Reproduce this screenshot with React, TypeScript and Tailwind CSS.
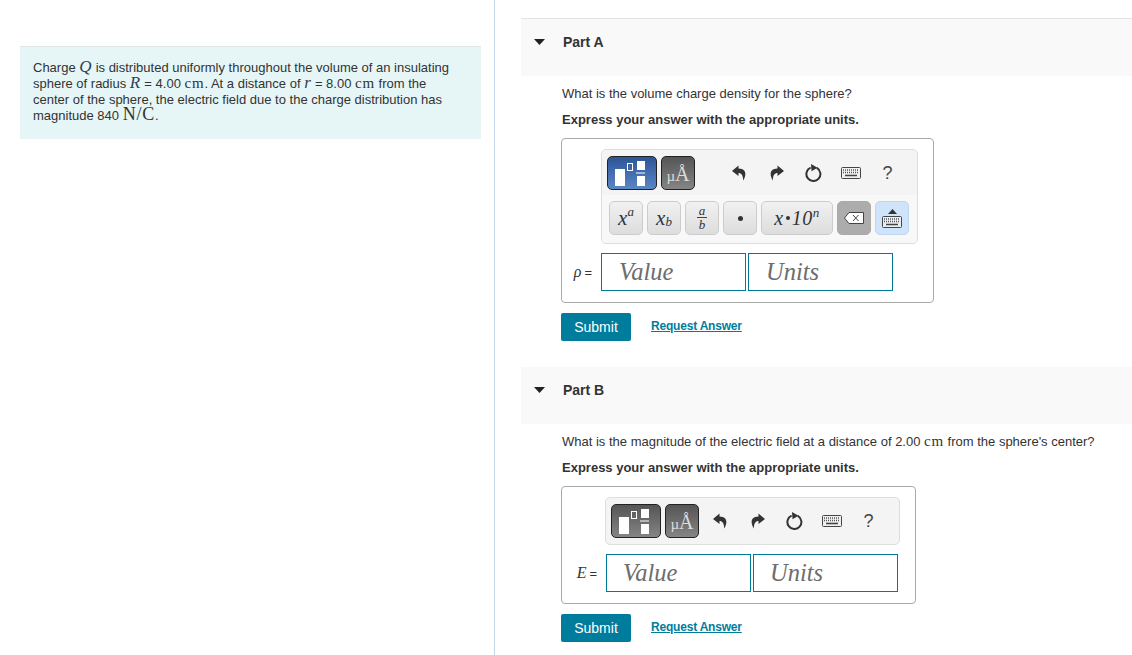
import React from 'react';

const serif = "font-['Liberation_Serif',serif]";

const Var: React.FC<{ children: React.ReactNode }> = ({ children }) => (
  <span className={`${serif} italic text-[17px] leading-[0] text-[#2f3f55] tracking-[0.5px]`}>{children}</span>
);

const Unit: React.FC<{ children: React.ReactNode }> = ({ children }) => (
  <span className={`${serif} text-[15px] leading-[0] tracking-[0.8px]`}>{children}</span>
);

const UndoIcon = () => (
  <svg width="15" height="16" viewBox="0 0 15 16">
    <path d="M6.5 0.5 L0 6 L6.5 11 L6.5 8 C9.5 8 11 10 11.2 15.5 C14 11 15.5 4 6.5 3.6 Z" fill="#333" />
  </svg>
);

const RedoIcon = () => (
  <svg width="15" height="16" viewBox="0 0 15 16">
    <path d="M8.5 0.5 L15 6 L8.5 11 L8.5 8 C5.5 8 4 10 3.8 15.5 C1 11 -0.5 4 8.5 3.6 Z" fill="#333" />
  </svg>
);

const ReloadIcon = () => (
  <svg width="18" height="18" viewBox="0 0 18 18" fill="none">
    <path d="M11.8 3.9 A7 7 0 1 1 5.6 3.6" stroke="#333" strokeWidth="2" />
    <path d="M6 0 L12.5 3.8 L6.5 7.2 Z" fill="#333" />
  </svg>
);

const KeyboardIcon: React.FC<{ fill?: string }> = ({ fill = '#f1f1f1' }) => (
  <svg width="20" height="12" viewBox="0 0 20 12">
    <rect x="0.5" y="0.5" width="19" height="11" rx="1" fill={fill} stroke="#444" />
    <path d="M2 3h16M2 5.5h16" stroke="#555" strokeWidth="1.3" strokeDasharray="1 1" />
    <path d="M4 8.5h12" stroke="#444" strokeWidth="1.6" />
  </svg>
);

const TemplateIcon = () => (
  <svg width="30" height="25" viewBox="0 0 30 25" className="mr-[4px]">
    <rect x="0" y="8" width="10" height="17" fill="#fff" />
    <rect x="12.5" y="2.5" width="5" height="7" fill="none" stroke="#fff" />
    <rect x="22" y="0" width="8" height="9" fill="#fff" />
    <rect x="21" y="11.5" width="10" height="1" fill="#fff" />
    <rect x="22" y="15" width="8" height="10" fill="#fff" />
  </svg>
);

const ToolIcon: React.FC<{ children: React.ReactNode }> = ({ children }) => (
  <div className="w-[37px] h-[34px] flex items-center justify-center">{children}</div>
);

const TopRow: React.FC<{ active?: boolean; iconGap: string }> = ({ active, iconGap }) => (
  <div className="flex items-center gap-[4px]">
    <div
      className={`w-[50px] h-[34px] rounded-[5px] border border-[#222] flex items-center justify-center ${
        active ? 'bg-gradient-to-b from-[#2c5596] to-[#5b86c6]' : 'bg-gradient-to-b from-[#555] to-[#858585]'
      }`}
    >
      <TemplateIcon />
    </div>
    <div className={`w-[34px] h-[34px] rounded-[5px] border border-[#222] bg-gradient-to-b from-[#555] to-[#858585] flex items-baseline justify-center ${serif} text-[#ddd] text-[20px] leading-[34px]`}>
      <span className="text-[15px]">µ</span>Å
    </div>
    <div className={`flex items-center ${iconGap}`}>
      <ToolIcon><UndoIcon /></ToolIcon>
      <ToolIcon><RedoIcon /></ToolIcon>
      <ToolIcon><ReloadIcon /></ToolIcon>
      <ToolIcon><KeyboardIcon /></ToolIcon>
      <ToolIcon><span className="text-[18px] text-[#444]">?</span></ToolIcon>
    </div>
  </div>
);

const keyClass = `h-[34px] rounded-[5px] border border-[#ccc] bg-gradient-to-b from-[#f1f1f1] to-[#dddddd] flex items-center justify-center ${serif} italic text-[#333]`;

const KeyRow = () => (
  <div className="flex items-start gap-[4px] mt-[5px] -ml-[5px] pl-[7px] pt-[6px] h-[48px] bg-[#f8f8f8]">
    <div className={`${keyClass} w-[34px] text-[21px]`}>
      x<sup className="text-[13px] -top-[6px] relative align-baseline">a</sup>
    </div>
    <div className={`${keyClass} w-[34px] text-[21px]`}>
      x<sub className="text-[13px] top-[4px] relative align-baseline">b</sub>
    </div>
    <div className={`${keyClass} w-[34px] flex-col text-[13px]`}>
      <span className="border-b border-[#444] px-[2px] leading-[13px]">a</span>
      <span className="leading-[14px]">b</span>
    </div>
    <div className={`${keyClass} w-[34px]`}>
      <span className="w-[5px] h-[5px] rounded-full bg-[#333]" />
    </div>
    <div className={`${keyClass} w-[72px] text-[20px] tracking-[0.5px]`}>
      x<span className="w-[4px] h-[4px] rounded-full bg-[#333] mx-[2px]" />10<sup className="text-[13px] -top-[5px] relative align-baseline">n</sup>
    </div>
    <div className="w-[34px] h-[34px] rounded-[5px] bg-[#acacac] border border-[#aaa] flex items-center justify-center">
      <svg width="20" height="12" viewBox="0 0 20 12">
        <path d="M5 0.5 H19.5 V11.5 H5 L0.5 6 Z" fill="#fff" stroke="#444" />
        <path d="M9 3 L14.5 9 M14.5 3 L9 9" stroke="#444" strokeWidth="1" />
      </svg>
    </div>
    <div className="w-[34px] h-[34px] rounded-[5px] bg-[#cfe4fb] border border-[#bcd6ee] flex flex-col items-center justify-center gap-[2px]">
      <svg width="9" height="5" viewBox="0 0 9 5">
        <path d="M4.5 0 L9 5 H0 Z" fill="#333" />
      </svg>
      <KeyboardIcon fill="#e9eef3" />
    </div>
  </div>
);

const AnswerInputs: React.FC<{ symbol: string; labelW: string; pad: string; inputPad: string }> = ({ symbol, labelW, pad, inputPad }) => (
  <div className="flex items-center h-[38px]">
    <div className={`${labelW} ${pad} flex justify-end items-baseline text-[13px] text-[#333]`}>
      <span className={`${serif} italic text-[16px] mr-[3px]`}>{symbol}</span>=
    </div>
    <div className="flex gap-[2px]">
      {['Value', 'Units'].map((t) => (
        <div
          key={t}
          className={`w-[145px] h-[38px] border border-[#007a9b] flex items-center ${inputPad} ${serif} italic text-[24.5px] text-[#6d6d6d]`}
        >
          {t}
        </div>
      ))}
    </div>
  </div>
);

const Actions = () => (
  <div className="flex items-center mt-[10px] -ml-px">
    <button className="w-[70px] h-[28px] rounded-[2px] bg-[#007c9d] text-white text-[14px]">Submit</button>
    <a className="ml-[20px] pb-[2px] text-[12px] tracking-[-0.2px] font-bold text-[#007c9d] underline">Request Answer</a>
  </div>
);

const PartHeader: React.FC<{ label: string; border?: boolean }> = ({ label, border }) => (
  <div className={`bg-[#f9f9f9] flex items-start pl-[13px] pt-[14px] ${border ? 'border-t border-[#e3e3e3] h-[58px]' : 'h-[57px]'}`}>
    <div className="w-[29px] h-[18px] flex items-center">
      <svg width="11" height="6" viewBox="0 0 11 6">
        <path d="M0 0 H11 L5.5 6 Z" fill="#222" />
      </svg>
    </div>
    <span className="text-[14px] leading-[18px] font-bold text-[#333]">{label}</span>
  </div>
);

export default function App() {
  return (
    <div className="flex w-[1132px] h-[655px] overflow-hidden bg-white font-['Liberation_Sans',Arial,sans-serif] text-[#333]">
      <div className="w-[495px] shrink-0 border-r border-[#c3d7e8] pt-[46px] pl-[20px] pr-[13px]">
        <div className="h-[93px] bg-[#e6f6f7] border-t border-[#dfe6e8] pl-[13px] pr-[20px] pt-[13px] text-[13px] leading-[16px]">
          Charge <Var>Q</Var> is distributed uniformly throughout the volume of an insulating sphere of radius{' '}
          <Var>R</Var> = 4.00 <Unit>cm</Unit>. At a distance of <Var>r</Var> = 8.00 <Unit>cm</Unit> from the center of
          the sphere, the electric field due to the charge distribution has magnitude 840{' '}
          <span className={`${serif} text-[18px] leading-[0] tracking-[0.8px]`}>N/C</span>.
        </div>
      </div>

      <div className="flex-1 pl-[26px] pt-[18px]">
        <PartHeader label="Part A" border />
        <div className="pl-[41px] text-[13px] leading-[16px]">
          <p className="mt-[10px]">What is the volume charge density for the sphere?</p>
          <p className="mt-[10px] font-bold">Express your answer with the appropriate units.</p>
          <div className="mt-[10px] -ml-px w-[373px] h-[165px] border border-[#aaa] rounded-[4px] pt-[10px]">
            <div className="ml-[39px] w-[317px] h-[95px] rounded-[5px] border border-[#ddd] bg-[#f4f4f4] pl-[5px] pt-[6px] overflow-hidden">
              <TopRow active iconGap="ml-[22px]" />
              <KeyRow />
            </div>
            <div className="mt-[9px]">
              <AnswerInputs symbol="ρ" labelW="w-[39px]" pad="pr-[9px]" inputPad="pl-[17px]" />
            </div>
          </div>
          <Actions />
        </div>

        <div className="mt-[26px]">
          <PartHeader label="Part B" />
        </div>
        <div className="pl-[41px] text-[13px] leading-[16px]">
          <p className="mt-[10px]">
            What is the magnitude of the electric field at a distance of 2.00 <Unit>cm</Unit> from the sphere's center?
          </p>
          <p className="mt-[10px] font-bold">Express your answer with the appropriate units.</p>
          <div className="mt-[10px] -ml-px w-[355px] h-[118px] border border-[#aaa] rounded-[4px] pt-[10px]">
            <div className="ml-[43px] w-[295px] h-[48px] rounded-[5px] border border-[#ddd] bg-[#f4f4f4] pl-[5px] pt-[6px]">
              <TopRow iconGap="-ml-px" />
            </div>
            <div className="mt-[9px]">
              <AnswerInputs symbol="E" labelW="w-[44px]" pad="pr-[9px]" inputPad="pl-[16px]" />
            </div>
          </div>
          <Actions />
        </div>
      </div>
    </div>
  );
}
